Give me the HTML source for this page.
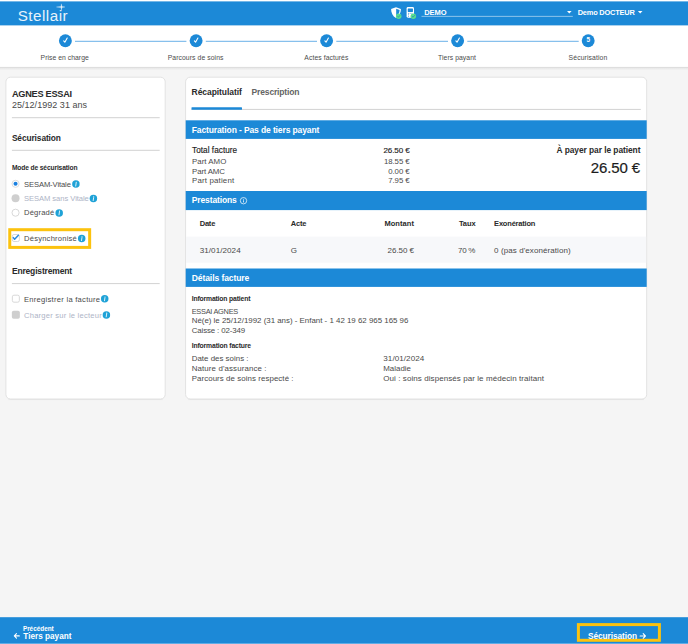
<!DOCTYPE html>
<html lang="fr">
<head>
<meta charset="utf-8">
<title>Stellair - Sécurisation</title>
<style>
*{box-sizing:border-box;margin:0;padding:0}
html,body{width:688px;height:644px;overflow:hidden;background:#f5f5f5}
body{position:relative;font-family:"Liberation Sans",sans-serif;font-size:8px;color:#3c3c3c;line-height:1}
.a{position:absolute;white-space:nowrap}
.slab{color:#4c4c4c;transform:translateX(-50%)}
.circ{width:13px;height:13px;border-radius:50%;background:#1c89d7;top:34.2px}
.sline{height:1px;background:#6ab1e8;top:40.8px}
.card{background:#fff;border:1px solid #e3e3e3;border-radius:5px;box-shadow:0 .5px 1.5px rgba(0,0,0,.07)}
.hr{height:1px;background:#d0d0d0}
.bar{background:#1c89d7;left:185.6px;width:461.2px}
.info{width:7px;height:7px}
.cb{width:8px;height:8px;border:1px solid #d6d6d6;border-radius:2px;background:#fff;left:11.85px}
.rd{width:8px;height:8px;border:1px solid #d9d9d9;border-radius:50%;background:#fff;left:11.6px}
</style>
</head>
<body>
<svg class="a" style="left:0;top:0" width="688" height="644" viewBox="0 0 688 644">
<defs>
<linearGradient id="sh" x1="0" y1="0" x2="0" y2="1"><stop offset="0" stop-color="#000" stop-opacity=".13"/><stop offset=".45" stop-color="#000" stop-opacity=".045"/><stop offset="1" stop-color="#000" stop-opacity="0"/></linearGradient>
<g id="inf"><circle cx="0" cy="0" r="3.75" fill="#1fa2d7"/><circle cx=".3" cy="-1.75" r=".55" fill="#fff"/><path d="M.2 -.75L-.2 1.95" fill="none" stroke="#fff" stroke-width=".85" stroke-linecap="round"/></g>
<g id="chk"><circle cx="0" cy="0" r="6.45" fill="#1c89d7"/><path d="M-1.7 .15L-.55 1.45L1.8 -2.65" fill="none" stroke="#fff" stroke-width="1.1" stroke-linecap="round" stroke-linejoin="round"/></g>
<g id="gchk"><circle cx="2.8" cy="2.8" r="2.75" fill="#58de8e"/><path d="M1.7 2.9l.85 .8 1.45-1.7" fill="none" stroke="#2079c6" stroke-width=".65" stroke-linecap="round" stroke-linejoin="round"/></g>
<path id="car" d="M0 0H4.6L2.3 2.7Z" fill="#fff"/>
</defs>
<!-- header -->
<rect x="0" y="0" width="688" height="2" fill="#fff"/>
<rect x="0" y="1.4" width="688" height="24.2" fill="#1c89d7"/>
<!-- logo star (covers the i dot) -->
<rect x="59.7" y="9.4" width="3.4" height="2.3" fill="#1c89d7"/>
<path d="M61.4 3.8L61.9 6.5L65 7L61.9 7.5L61.4 10.6L60.9 7.5L56.4 7L60.9 6.5Z" fill="#fff" stroke="#fff" stroke-width=".25" opacity=".92"/>
<!-- shield -->
<g transform="translate(390.8 7.2)"><path d="M5.2 0.1L10.1 1.9C10.1 5.9 8.5 9.1 5.2 10.9C1.9 9.1 0.3 5.9 0.3 1.9Z" fill="#fff"/><path d="M5.4 1.6L8.8 2.85C8.7 5.5 7.7 7.7 5.4 9.2Z" fill="#1c89d7"/></g>
<use href="#gchk" x="395.9" y="13.5"/>
<!-- card reader -->
<g transform="translate(406.4 7)"><rect x=".2" y="0" width="7.4" height="10.7" rx="1.4" fill="#fff"/><rect x="1.35" y="1.55" width="5.2" height="3.4" rx=".4" fill="#1c89d7"/><g fill="#1c89d7" opacity=".8"><rect x="1.6" y="5.9" width="1" height=".8"/><rect x="1.6" y="7.4" width="1" height=".8"/><rect x="3.3" y="5.9" width="1" height=".8"/><rect x="5" y="5.9" width="1" height=".8"/><rect x="1.6" y="8.9" width="1" height=".8"/></g></g>
<use href="#gchk" x="410.5" y="13.5"/>
<rect x="421.5" y="15.9" width="151.3" height=".8" fill="#fff" opacity=".62"/>
<use href="#car" x="567" y="10.9"/>
<use href="#car" x="637.9" y="10.9"/>
<!-- stepper -->
<rect x="0" y="66.8" width="688" height="3.6" fill="url(#sh)"/>
<rect x="0" y="25.6" width="688" height="41.2" fill="#fff"/>
<g fill="#6ab1e8"><rect x="75" y="40.8" width="111.4" height="1"/><rect x="205.8" y="40.8" width="111.2" height="1"/><rect x="336.3" y="40.8" width="111.7" height="1"/><rect x="467.3" y="40.8" width="111.4" height="1"/></g>
<use href="#chk" x="65.4" y="40.7"/><use href="#chk" x="196.1" y="40.7"/><use href="#chk" x="326.6" y="40.7"/><use href="#chk" x="457.6" y="40.7"/>
<circle cx="588.2" cy="40.7" r="6.45" fill="#1c89d7"/>
<!-- cards -->
<g fill="#fff" stroke="#e2e2e2" stroke-width="1"><rect x="5.9" y="77.2" width="159.3" height="321.8" rx="4.6"/><rect x="185.6" y="77.2" width="461.1" height="321.8" rx="4.6"/></g>
<rect x="8" y="399.4" width="155" height=".7" fill="#000" opacity=".05"/><rect x="188" y="399.4" width="456" height=".7" fill="#000" opacity=".05"/>
<g fill="#d2d2d2"><rect x="11.9" y="117.2" width="147.8" height="1"/><rect x="11.9" y="149.8" width="147.8" height="1"/><rect x="11.9" y="283.1" width="147.8" height="1"/><rect x="191.5" y="108.9" width="449.3" height="1"/></g>
<!-- radios -->
<circle cx="15.55" cy="183.8" r="3.55" fill="#fff" stroke="#d9d9d9" stroke-width=".9"/><circle cx="15.55" cy="183.8" r="2.05" fill="#1a80e0"/>
<circle cx="15.55" cy="198.2" r="4" fill="#cfcfcf"/>
<circle cx="15.55" cy="212.7" r="3.55" fill="#fff" stroke="#d4d4d4" stroke-width=".9"/>
<use href="#inf" x="75.9" y="184.1"/><use href="#inf" x="93.4" y="198.6"/><use href="#inf" x="59.2" y="212.9"/>
<!-- highlighted checkbox -->
<rect x="9.75" y="229.7" width="79.9" height="17.7" fill="none" stroke="#fcc20e" stroke-width="3"/>
<rect x="12.35" y="234.5" width="7" height="7" rx="1.6" fill="#fff" stroke="#d8d8d8" stroke-width="1"/>
<path d="M13.3 237.6l1.3 1.7L18.4 235.2" fill="none" stroke="#2a8ae2" stroke-width="1.5" stroke-linecap="round" stroke-linejoin="round"/>
<use href="#inf" x="81.7" y="238.6"/>
<rect x="12.35" y="295.2" width="7" height="7" rx="1.6" fill="#fff" stroke="#d8d8d8" stroke-width="1"/>
<rect x="11.85" y="310.8" width="8" height="8" rx="1.8" fill="#cfcfcf"/>
<use href="#inf" x="104.7" y="298.8"/><use href="#inf" x="106.4" y="314.9"/>
<!-- right card -->
<rect x="191.5" y="107.2" width="50.5" height="2.6" rx=".6" fill="#1c89d7"/>
<g fill="#1c89d7"><rect x="185.7" y="120.3" width="461" height="18.6"/><rect x="185.7" y="191" width="461" height="19.1"/><rect x="185.7" y="268.5" width="461" height="18.4"/></g>
<g transform="translate(239.7 196.9) scale(.5429)"><circle cx="7" cy="7" r="5.9" fill="none" stroke="#fff" stroke-width="1.3"/><rect x="6.3" y="6.2" width="1.4" height="4" fill="#fff"/><rect x="6.3" y="3.6" width="1.4" height="1.5" fill="#fff"/></g>
<rect x="186.1" y="236.6" width="460.1" height="26.1" fill="#f7f8fa"/>
<!-- footer -->
<rect x="0" y="617.2" width="688" height="26.8" fill="#1c89d7"/>
<rect x="0" y="643.3" width="688" height=".7" fill="#7fbdec"/>
<g fill="none" stroke="#fff" stroke-width="1.1" stroke-linecap="round" stroke-linejoin="round"><path d="M19.3 635.9H14.5M16.5 633.6L14.3 635.9l2.2 2.3"/><path d="M640.1 636h4.9M643.2 633.7L645.4 636l-2.2 2.3"/></g>
<rect x="578.4" y="624.6" width="81" height="15.7" fill="none" stroke="#fcc20e" stroke-width="3"/>
</svg>
<div class="a" id="n5" style="left:581.9px;top:37px;width:13px;text-align:center;font-size:6.4px;font-weight:bold;color:#fff">5</div>
<div class="a" id="logo" style="left:17.70px;top:8.00px;font-size:15.2px;color:#fff;letter-spacing:0.495px;opacity:.9">Stellair</div>
<div class="a" id="demo" style="left:424.20px;top:9.00px;font-size:7.5px;color:#fff;font-weight:bold;letter-spacing:-0.050px;">DEMO</div>
<div class="a" id="doc" style="left:577.70px;top:9.00px;font-size:7.4px;color:#fff;font-weight:bold;letter-spacing:-0.190px;">Demo DOCTEUR</div>
<div class="a" id="l1" style="left:11.90px;top:90.00px;font-size:9.2px;color:#2a2a2a;font-weight:bold;letter-spacing:-0.261px;">AGNES ESSAI</div>
<div class="a" id="l2" style="left:11.90px;top:101.00px;font-size:9.0px;color:#4a4a4a;letter-spacing:0.038px;">25/12/1992 31 ans</div>
<div class="a" id="l3" style="left:11.90px;top:134.00px;font-size:8.4px;color:#2a2a2a;font-weight:bold;letter-spacing:-0.110px;">Sécurisation</div>
<div class="a" id="l4" style="left:11.90px;top:165.00px;font-size:6.7px;color:#2a2a2a;font-weight:bold;letter-spacing:-0.140px;">Mode de sécurisation</div>
<div class="a" id="l5" style="left:24.00px;top:181.00px;font-size:7.6px;color:#4a4a4a;letter-spacing:-0.094px;">SESAM-Vitale</div>
<div class="a" id="l6" style="left:24.00px;top:195.00px;font-size:7.6px;color:#aeb4c6;letter-spacing:-0.054px;">SESAM sans Vitale</div>
<div class="a" id="l7" style="left:24.00px;top:209.00px;font-size:7.6px;color:#4a4a4a;letter-spacing:0.169px;">Dégradé</div>
<div class="a" id="l8" style="left:24.00px;top:235.00px;font-size:7.6px;color:#4a4a4a;letter-spacing:0.218px;">Désynchronisé</div>
<div class="a" id="l9" style="left:11.90px;top:267.00px;font-size:8.5px;color:#2a2a2a;font-weight:bold;letter-spacing:-0.168px;">Enregistrement</div>
<div class="a" id="l10" style="left:24.00px;top:296.00px;font-size:7.6px;color:#4a4a4a;letter-spacing:0.265px;">Enregistrer la facture</div>
<div class="a" id="l11" style="left:24.00px;top:312.00px;font-size:7.6px;color:#aeb4c6;letter-spacing:0.225px;">Charger sur le lecteur</div>
<div class="a" id="t1" style="left:191.60px;top:88.00px;font-size:8.5px;color:#2a2a2a;font-weight:bold;letter-spacing:-0.070px;">Récapitulatif</div>
<div class="a" id="t2" style="left:251.60px;top:88.00px;font-size:8.5px;color:#646464;font-weight:bold;letter-spacing:-0.158px;">Prescription</div>
<div class="a" id="b1" style="left:191.70px;top:126.00px;font-size:8.5px;color:#fff;font-weight:bold;letter-spacing:-0.114px;">Facturation - Pas de tiers payant</div>
<div class="a" id="f1" style="left:192.00px;top:147.00px;font-size:8.2px;color:#1c1c1c;letter-spacing:0.046px;-webkit-text-stroke:.15px #1c1c1c">Total facture</div>
<div class="a" id="f2" style="left:192.00px;top:158.00px;font-size:7.9px;color:#4a4a4a;letter-spacing:0.022px;">Part AMO</div>
<div class="a" id="f3" style="left:192.00px;top:168.00px;font-size:7.9px;color:#4a4a4a;letter-spacing:-0.115px;">Part AMC</div>
<div class="a" id="f4" style="left:192.00px;top:177.00px;font-size:7.9px;color:#4a4a4a;letter-spacing:0.164px;">Part patient</div>
<div class="a" id="v1" style="left:383.40px;top:147.00px;font-size:8.0px;color:#1c1c1c;letter-spacing:-0.074px;-webkit-text-stroke:.15px #1c1c1c">26.50 €</div>
<div class="a" id="v2" style="left:383.90px;top:158.00px;font-size:7.8px;color:#4a4a4a;letter-spacing:-0.043px;">18.55 €</div>
<div class="a" id="v3" style="left:388.20px;top:168.00px;font-size:7.8px;color:#4a4a4a;letter-spacing:-0.046px;">0.00 €</div>
<div class="a" id="v4" style="left:388.20px;top:177.00px;font-size:7.8px;color:#4a4a4a;letter-spacing:-0.046px;">7.95 €</div>
<div class="a" id="p1" style="left:556.40px;top:146.00px;font-size:8.4px;color:#2a2a2a;font-weight:bold;letter-spacing:-0.053px;">À payer par le patient</div>
<div class="a" id="p2" style="left:590.80px;top:160.00px;font-size:15.0px;color:#1c1c1c;letter-spacing:-0.124px;-webkit-text-stroke:.2px #1c1c1c">26.50 €</div>
<div class="a" id="b2" style="left:191.70px;top:196.00px;font-size:8.5px;color:#fff;font-weight:bold;letter-spacing:-0.113px;">Prestations</div>
<div class="a" id="h1" style="left:199.70px;top:220.00px;font-size:7.5px;color:#2a2a2a;font-weight:bold;letter-spacing:-0.205px;">Date</div>
<div class="a" id="h2" style="left:290.80px;top:220.00px;font-size:7.5px;color:#2a2a2a;font-weight:bold;letter-spacing:-0.172px;">Acte</div>
<div class="a" id="h3" style="left:384.40px;top:220.00px;font-size:7.5px;color:#2a2a2a;font-weight:bold;letter-spacing:0.063px;">Montant</div>
<div class="a" id="h4" style="left:458.90px;top:220.00px;font-size:7.5px;color:#2a2a2a;font-weight:bold;letter-spacing:-0.068px;">Taux</div>
<div class="a" id="h5" style="left:494.10px;top:220.00px;font-size:7.5px;color:#2a2a2a;font-weight:bold;letter-spacing:-0.199px;">Exonération</div>
<div class="a" id="r1" style="left:199.70px;top:247.00px;font-size:8.1px;color:#4a4a4a;letter-spacing:0.050px;">31/01/2024</div>
<div class="a" id="r2" style="left:290.80px;top:247.00px;font-size:8.0px;color:#4a4a4a;">G</div>
<div class="a" id="r3" style="left:387.60px;top:247.00px;font-size:8.0px;color:#4a4a4a;letter-spacing:-0.057px;">26.50 €</div>
<div class="a" id="r4" style="left:458.00px;top:247.00px;font-size:8.0px;color:#4a4a4a;letter-spacing:-0.291px;">70 %</div>
<div class="a" id="r5" style="left:494.10px;top:247.00px;font-size:8.0px;color:#4a4a4a;letter-spacing:0.083px;">0 (pas d'exonération)</div>
<div class="a" id="b3" style="left:191.70px;top:274.00px;font-size:8.5px;color:#fff;font-weight:bold;letter-spacing:-0.066px;">Détails facture</div>
<div class="a" id="d1" style="left:191.70px;top:296.00px;font-size:6.8px;color:#2a2a2a;font-weight:bold;letter-spacing:-0.157px;">Information patient</div>
<div class="a" id="d2" style="left:191.70px;top:308.00px;font-size:7.4px;color:#4a4a4a;letter-spacing:-0.275px;">ESSAI AGNES</div>
<div class="a" id="d3" style="left:191.70px;top:317.00px;font-size:7.9px;color:#4a4a4a;">Né(e) le 25/12/1992 (31 ans) - Enfant - 1 42 19 62 965 165 96</div>
<div class="a" id="d4" style="left:191.70px;top:327.00px;font-size:7.9px;color:#4a4a4a;letter-spacing:-0.129px;">Caisse : 02-349</div>
<div class="a" id="d5" style="left:191.70px;top:343.00px;font-size:6.8px;color:#2a2a2a;font-weight:bold;letter-spacing:-0.139px;">Information facture</div>
<div class="a" id="d6" style="left:191.70px;top:355.00px;font-size:7.9px;color:#4a4a4a;letter-spacing:0.018px;">Date des soins :</div>
<div class="a" id="d7" style="left:191.70px;top:365.00px;font-size:7.9px;color:#4a4a4a;letter-spacing:0.116px;">Nature d'assurance :</div>
<div class="a" id="d8" style="left:191.70px;top:375.00px;font-size:7.9px;color:#4a4a4a;letter-spacing:0.069px;">Parcours de soins respecté :</div>
<div class="a" id="d9" style="left:383.30px;top:355.00px;font-size:8.1px;color:#4a4a4a;letter-spacing:0.050px;">31/01/2024</div>
<div class="a" id="d10" style="left:383.30px;top:365.00px;font-size:7.9px;color:#4a4a4a;">Maladie</div>
<div class="a" id="d11" style="left:383.30px;top:375.00px;font-size:8.0px;color:#4a4a4a;letter-spacing:0.074px;">Oui : soins dispensés par le médecin traitant</div>
<div class="a" id="g1" style="left:22.90px;top:626.00px;font-size:6.4px;color:#fff;font-weight:bold;letter-spacing:-0.010px;">Précédent</div>
<div class="a" id="g2" style="left:23.30px;top:633.00px;font-size:8.2px;color:#fff;font-weight:bold;letter-spacing:0.006px;">Tiers payant</div>
<div class="a" id="g3" style="left:588.00px;top:632.00px;font-size:8.3px;color:#fff;font-weight:bold;letter-spacing:-0.068px;">Sécurisation</div>
<div class="a slab" id="s1" style="left:64.70px;top:55.00px;font-size:6.8px;letter-spacing:0.038px;">Prise en charge</div>
<div class="a slab" id="s2" style="left:195.60px;top:55.00px;font-size:6.8px;letter-spacing:0.083px;">Parcours de soins</div>
<div class="a slab" id="s3" style="left:326.40px;top:55.00px;font-size:6.8px;letter-spacing:0.074px;">Actes facturés</div>
<div class="a slab" id="s4" style="left:457.00px;top:55.00px;font-size:6.8px;letter-spacing:0.071px;">Tiers payant</div>
<div class="a slab" id="s5" style="left:588.00px;top:55.00px;font-size:6.8px;letter-spacing:0.121px;">Sécurisation</div>
</body>
</html>
